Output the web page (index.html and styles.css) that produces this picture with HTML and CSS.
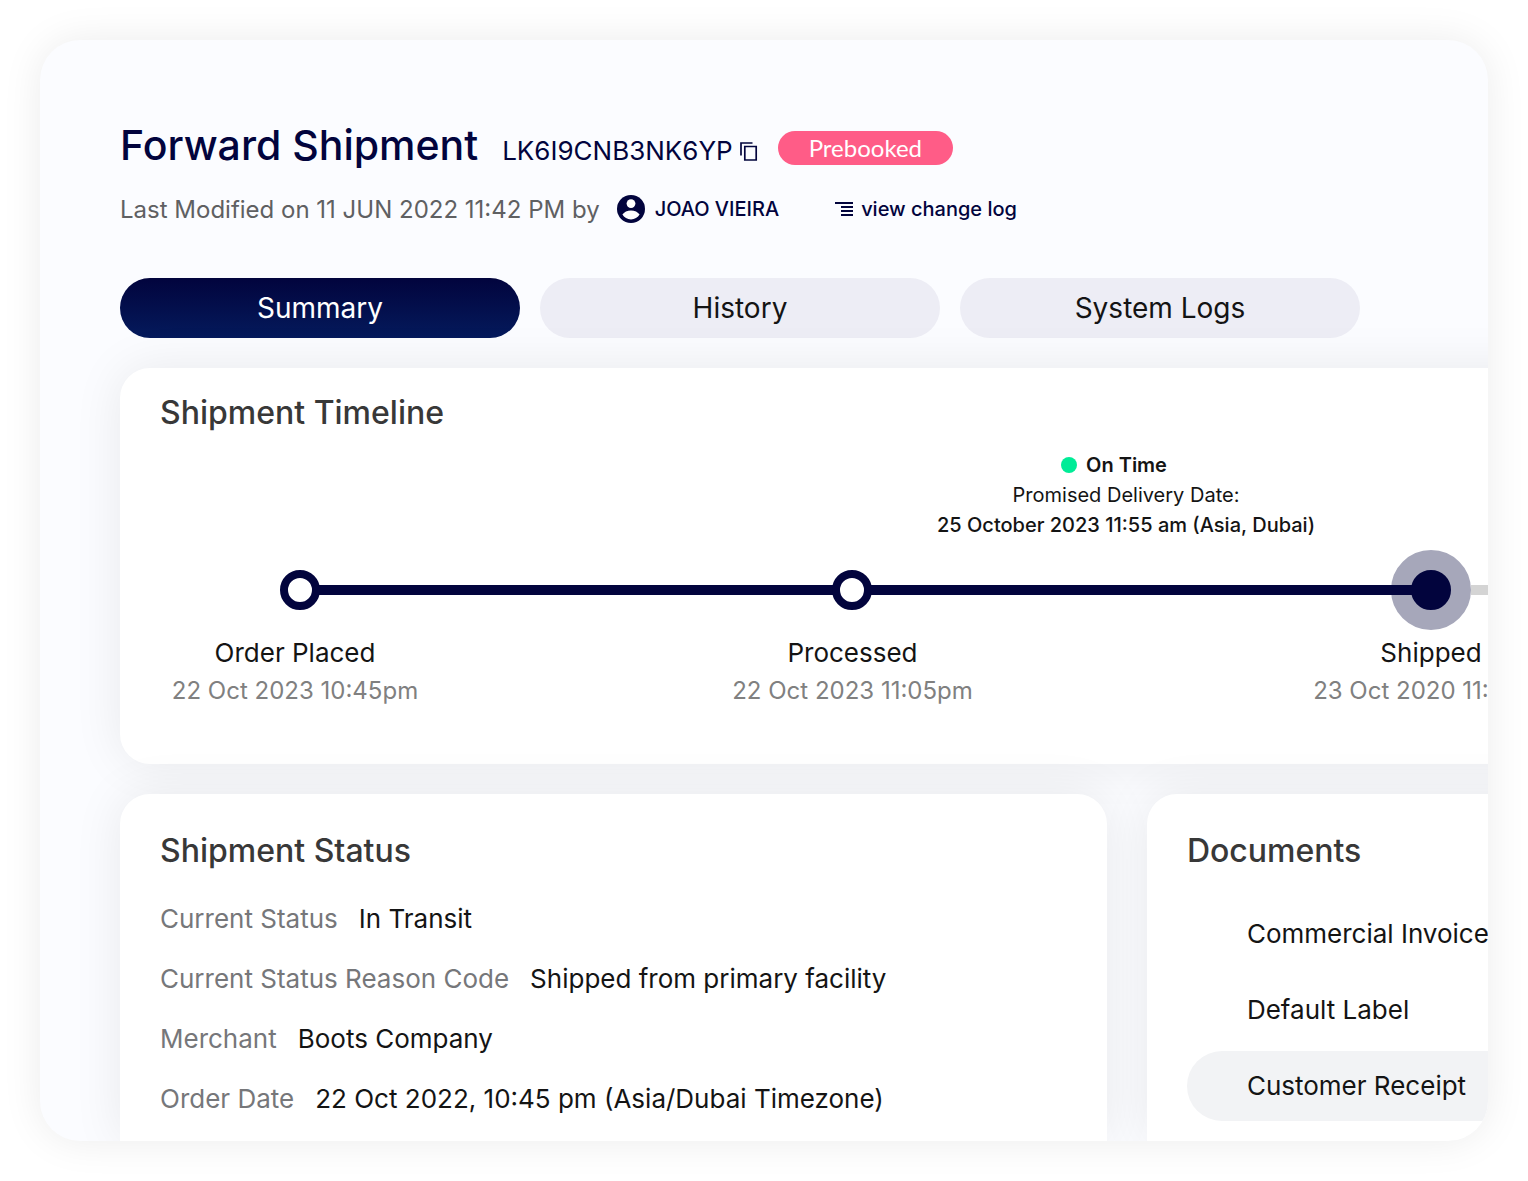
FILE: index.html
```html
<!DOCTYPE html>
<html lang="en">
<head>
  <meta charset="UTF-8" />
  <meta name="viewport" content="width=device-width, initial-scale=1.0"/>
  <title>Forward Shipment</title>
  <link rel="stylesheet" href="styles.css">
</head>
<body>

  <main class="frame">
    <header class="page-header">
      <div class="title-row">
        <h1>Forward Shipment</h1>
        <span class="shipment-id">LK6I9CNB3NK6YP</span>
        <button class="icon-btn" type="button" aria-label="Copy shipment ID">
          <svg width="18" height="19" viewBox="0 0 18 19" fill="none" stroke="currentColor" stroke-width="1.7">
            <path d="M1 13.500V1h11.500"/>
            <path d="M4.800 4.500h11.400v13.500H4.800z"/>
          </svg>
        </button>
        <span class="badge">Prebooked</span>
      </div>
      <div class="meta-row">
        <span class="modified">Last Modified on 11 JUN 2022 11:42 PM by</span>
        <svg class="avatar" width="28" height="28" viewBox="0 0 28 28">
          <circle cx="14" cy="14" r="14" fill="#02043d"/>
          <circle cx="14" cy="8.600" r="4.400" fill="#fff"/>
          <path d="M5.400 19.600c1.600-2.700 5-4.200 8.600-4.200s7 1.500 8.600 4.200c-1.700 3-5 4.900-8.600 4.900s-6.900-1.900-8.600-4.900z" fill="#fff"/>
        </svg>
        <span class="user">JOAO VIEIRA</span>
        <a class="change-log" href="#">
          <svg width="18" height="14" viewBox="0 0 18 14" fill="none" stroke="currentColor" stroke-width="1.8">
            <path d="M0 1h18M6 5h12M6 9h12M6 13h12"/>
          </svg>
          view change log
        </a>
      </div>
    </header>

    <nav class="tabs">
      <button class="tab active" type="button">Summary</button>
      <button class="tab" type="button">History</button>
      <button class="tab" type="button">System Logs</button>
    </nav>

    <div class="cards">
      <section class="card timeline">
        <h2>Shipment Timeline</h2>
        <div class="promise">
          <p class="on-time"><span class="dot"></span>On Time</p>
          <p>Promised Delivery Date:</p>
          <p class="promise-date">25 October 2023 11:55 am (Asia, Dubai)</p>
        </div>
        <div class="track" aria-hidden="true">
          <span class="node"></span>
          <span class="line"></span>
          <span class="node"></span>
          <span class="line to-current"></span>
          <span class="node current"></span>
          <span class="line pending"></span>
        </div>
        <ol class="steps">
          <li>Order Placed <time>22 Oct 2023 10:45pm</time></li>
          <li>Processed <time>22 Oct 2023 11:05pm</time></li>
          <li>Shipped <time>23 Oct 2020 11:15pm</time></li>
        </ol>
      </section>

      <section class="card status">
        <h2>Shipment Status</h2>
        <dl>
          <div><dt>Current Status</dt><dd>In Transit</dd></div>
          <div><dt>Current Status Reason Code</dt><dd>Shipped from primary facility</dd></div>
          <div><dt>Merchant</dt><dd>Boots Company</dd></div>
          <div><dt>Order Date</dt><dd>22 Oct 2022, 10:45 pm (Asia/Dubai Timezone)</dd></div>
        </dl>
      </section>

      <section class="card documents">
        <h2>Documents</h2>
        <ul>
          <li><a href="#">Commercial Invoice</a></li>
          <li><a href="#">Default Label</a></li>
          <li><a class="selected" href="#">Customer Receipt</a></li>
        </ul>
      </section>
    </div>
  </main>

</body>
</html>
```
FILE: styles.css
```css
* {
  box-sizing: border-box;
}

body {
  margin: 0;
  padding: 40px;
  font-family: Inter, "Liberation Sans", sans-serif;
  background: #fff;
  color: #141414;
}

h1, h2, p, ol, ul, dl, dd {
  margin: 0;
  padding: 0;
}

ol, ul {
  list-style: none;
}

button {
  border: none;
  font-family: inherit;
  cursor: pointer;
}

a {
  color: inherit;
  text-decoration: none;
}

.frame {
  min-height: calc(100vh - 80px);
  padding: 80px 0 0 80px;
  border-radius: 40px;
  background: #fbfcff;
  box-shadow: 0 0 40px rgba(0, 0, 0, 0.08);
  overflow: hidden;
}

.title-row {
  display: flex;
  align-items: baseline;
  height: 52px;
  color: #02043d;
}

h1 {
  font-size: 41px;
  font-weight: 500;
  line-height: 50px;
}

.shipment-id {
  margin-left: 24px;
  font-size: 26px;
}

.icon-btn {
  align-self: center;
  margin: 10px 0 0 7px;
  padding: 0;
  background: none;
  color: inherit;
  line-height: 0;
}

.badge {
  align-self: center;
  margin: 4px 0 0 20px;
  padding: 0 31px;
  border-radius: 17px;
  background: #ff5c87;
  color: #fff;
  font-family: Lato, sans-serif;
  font-size: 24px;
  line-height: 34px;
}

.meta-row {
  display: flex;
  align-items: center;
  height: 32px;
  margin-top: 21px;
  color: #02043d;
}

.modified {
  color: #5f6062;
  font-size: 24px;
}

.avatar {
  margin: 0 10px 0 17px;
}

.user {
  font-size: 20px;
  font-weight: 500;
}

.change-log {
  display: flex;
  align-items: center;
  gap: 8px;
  margin-left: 56px;
  font-size: 20px;
  font-weight: 500;
}

.tabs {
  display: flex;
  gap: 20px;
  margin: 53px 0 30px;
}

.tab {
  width: 400px;
  height: 60px;
  border-radius: 30px;
  background: #ededf5;
  color: #141414;
  font-size: 28px;
}

.tab.active {
  background: linear-gradient(#02043d, #041a5c);
  color: #fff;
}

/* the cards run on past the right edge of the frame */
.cards {
  display: grid;
  grid-template-columns: 37fr 18fr;
  gap: 30px 40px;
  margin-right: -139px;
}

.card {
  padding: 37px 40px 12px;
  border-radius: 30px 30px 0 0;
  background: #fff;
  box-shadow: 0 0 50px rgba(0, 0, 0, 0.08);
}

h2 {
  color: #383838;
  font-size: 32px;
  font-weight: 500;
  line-height: 40px;
}

.timeline {
  grid-column: 1 / -1;
  padding: 25px 40px 54px;
  border-radius: 30px;
}

.promise {
  width: 380px;
  margin: 17px 0 0 776px;
  font-size: 20px;
  line-height: 30px;
  text-align: center;
  white-space: nowrap;
}

.on-time {
  display: flex;
  align-items: center;
  justify-content: center;
  gap: 9px;
  padding-right: 24px;
  font-weight: 600;
}

.dot {
  width: 16px;
  height: 16px;
  border-radius: 50%;
  background: #00ec97;
}

.promise-date {
  font-weight: 500;
}

.track {
  display: grid;
  grid-template-columns: 40px 64fr 40px 65fr 80px 116px;
  align-items: center;
  margin: 10px 0 0 120px;
}

.node {
  height: 40px;
  border: 8px solid #02043d;
  border-radius: 50%;
}

.node.current {
  height: 80px;
  border: 20px solid #a6a7ba;
  background: #02043d;
}

.line {
  height: 10px;
  margin: 0 -2px;
  background: #02043d;
}

.line.to-current {
  z-index: 1;
  margin-right: -22px;
}

.line.pending {
  margin: 0;
  background: #d4d4d4;
}

.steps {
  display: grid;
  grid-template-columns: 270px 1fr 312px;
  margin-top: 4px;
  font-size: 26px;
  line-height: 38px;
  text-align: center;
}

.steps time {
  display: block;
  color: #808080;
  font-size: 24px;
}

dl {
  margin-top: 18px;
  font-size: 26px;
  line-height: 60px;
}

dl div {
  display: flex;
  gap: 21px;
}

dt {
  color: #76777a;
}

.documents ul {
  margin-top: 28px;
}

.documents a {
  display: block;
  margin-bottom: 6px;
  padding-left: 60px;
  border-radius: 35px;
  font-size: 26px;
  line-height: 70px;
}

.documents a.selected {
  margin-bottom: 0;
  background: #f2f3f5;
}
```
